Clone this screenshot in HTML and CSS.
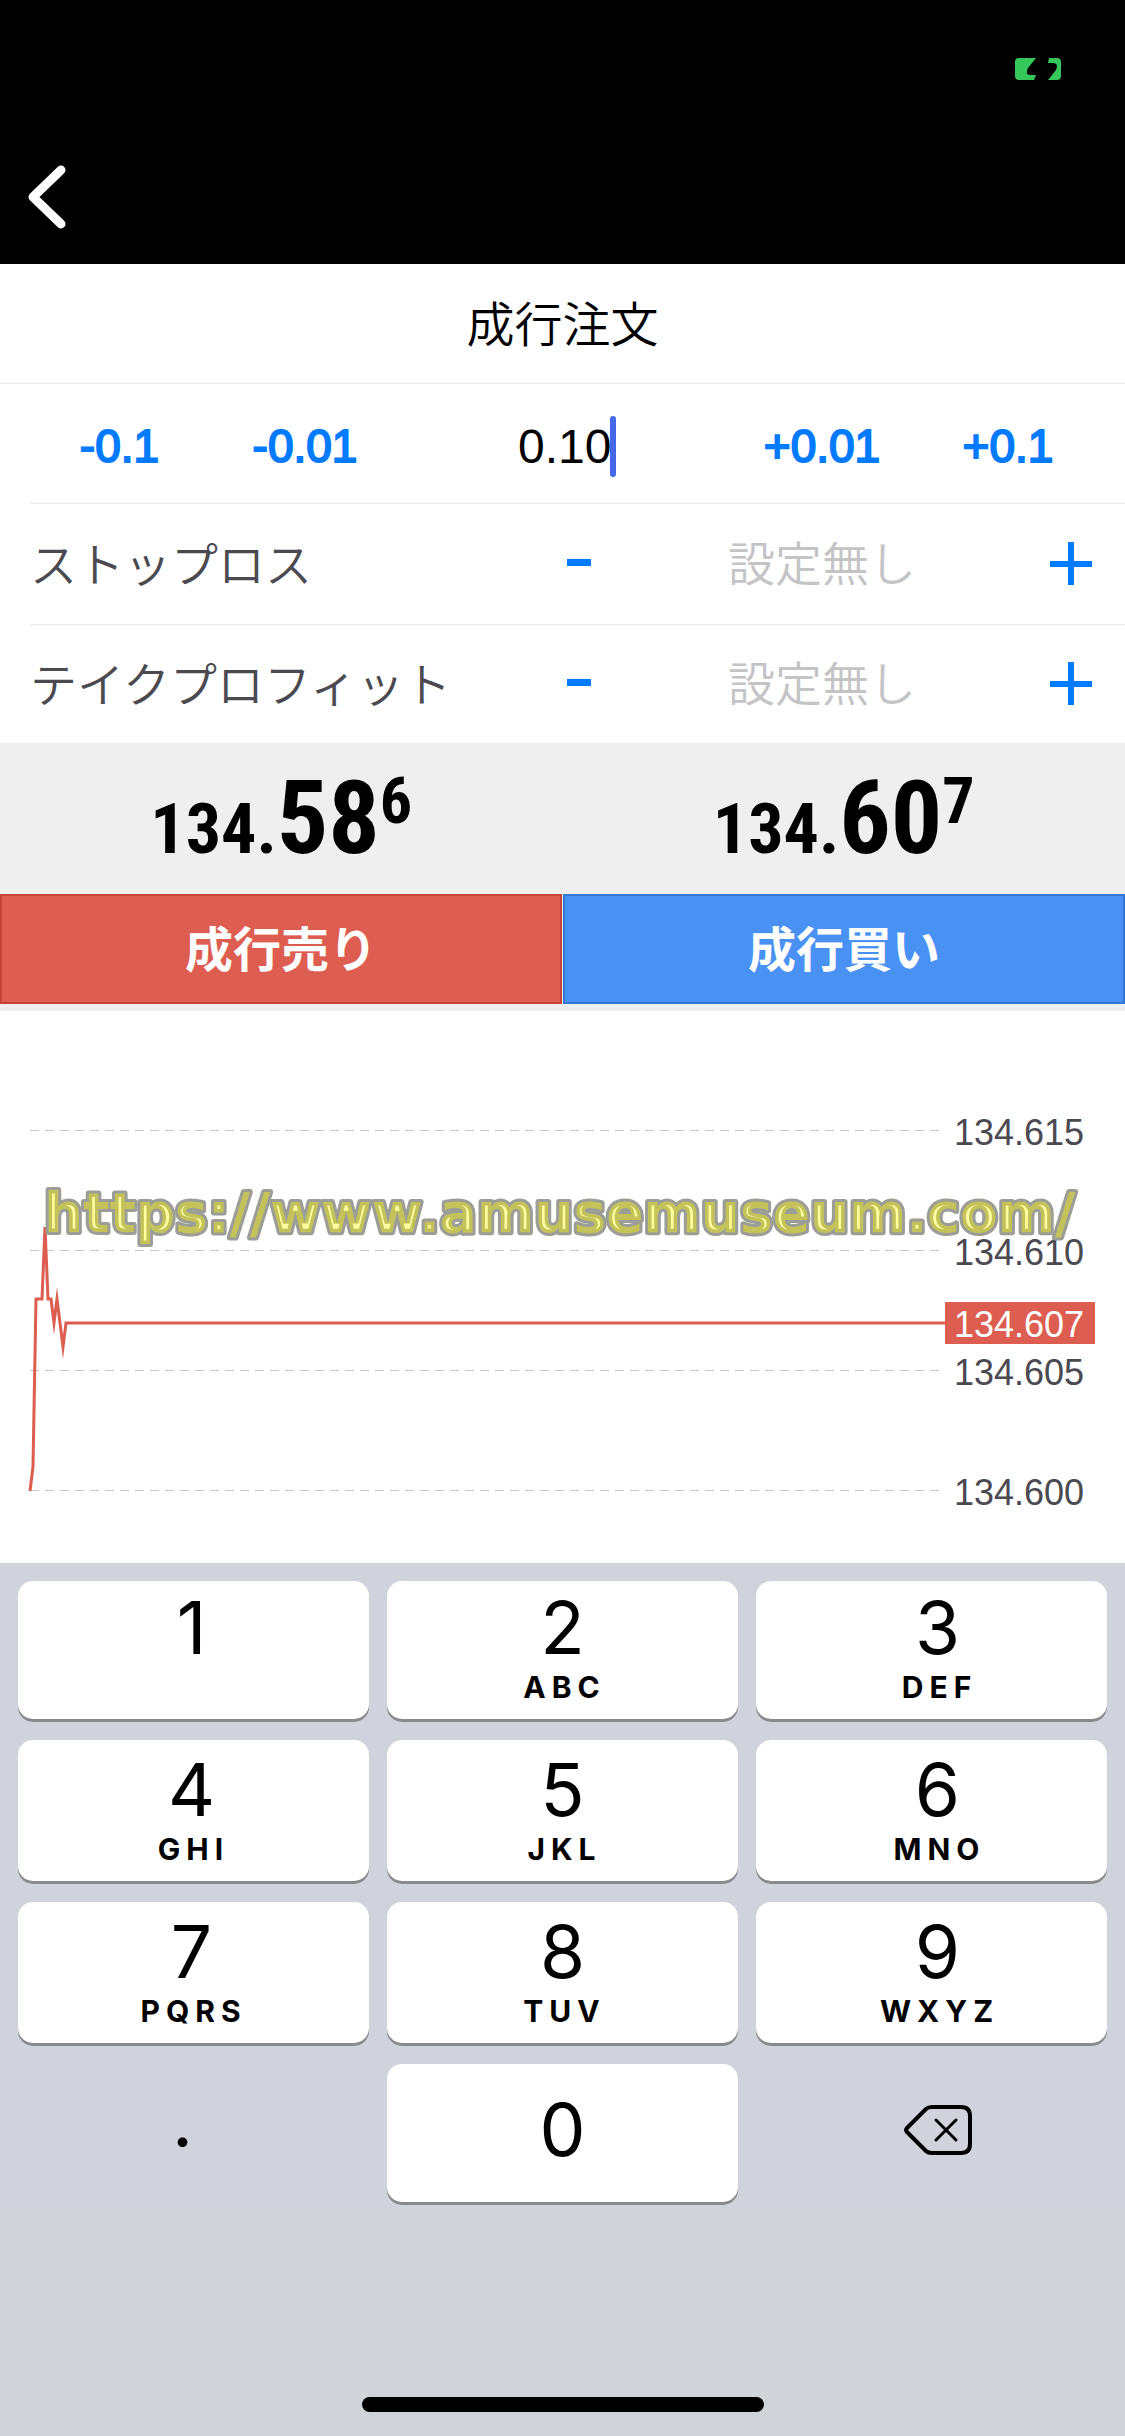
FILE: index.html
```html
<!DOCTYPE html>
<html lang="ja">
<head>
    <meta charset="UTF-8">
    <meta name="viewport" content="width=device-width, initial-scale=1.0">
    <title>成行注文</title>
    <link rel="stylesheet" href="styles.css">
</head>
<body>
    <header class="topbar">
        <div class="status">
            <svg class="battery" width="46" height="22" viewBox="0 0 46 22" aria-hidden="true">
                <path fill="#35c759" d="M4 0H21L13 10Q10 17 15 17H21L19 22H4Q0 22 0 18V4Q0 0 4 0Z"/>
                <path fill="#35c759" d="M34 0H42Q46 0 46 4V18Q46 22 42 22H33L41 12Q44 5 38 5H33Z"/>
            </svg>
        </div>
        <button class="back" type="button" aria-label="戻る">
            <svg width="38" height="64" viewBox="0 0 38 64" fill="none" stroke="#fff" stroke-width="9" stroke-linecap="round" stroke-linejoin="round">
                <path d="M33 5L5 32L33 59"/>
            </svg>
        </button>
    </header>

    <main class="order">
        <h1 class="title">成行注文</h1>

        <!-- ロット数 -->
        <div class="volume">
            <button class="step" type="button">-0.1</button>
            <button class="step" type="button">-0.01</button>
            <div class="lot">
                <input class="lot-input" type="text" inputmode="decimal" value="0.10" aria-label="数量">
                <span class="caret"></span>
            </div>
            <button class="step" type="button">+0.01</button>
            <button class="step" type="button">+0.1</button>
        </div>

        <div class="row">
            <label class="name" for="stopLoss">ストップロス</label>
            <button class="adjust" type="button" aria-label="減らす">
                <svg width="44" height="44" viewBox="0 0 44 44"><path fill="#007aff" d="M10 17h24v7H10z"/></svg>
            </button>
            <input class="value" id="stopLoss" type="text" placeholder="設定無し">
            <button class="adjust" type="button" aria-label="増やす">
                <svg width="44" height="44" viewBox="0 0 44 44"><path fill="#007aff" d="M1 19h18V0h6v19h18v6H25v18h-6V25H1z"/></svg>
            </button>
        </div>
        <div class="row">
            <label class="name" for="takeProfit">テイクプロフィット</label>
            <button class="adjust" type="button" aria-label="減らす">
                <svg width="44" height="44" viewBox="0 0 44 44"><path fill="#007aff" d="M10 17h24v7H10z"/></svg>
            </button>
            <input class="value" id="takeProfit" type="text" placeholder="設定無し">
            <button class="adjust" type="button" aria-label="増やす">
                <svg width="44" height="44" viewBox="0 0 44 44"><path fill="#007aff" d="M1 19h18V0h6v19h18v6H25v18h-6V25H1z"/></svg>
            </button>
        </div>

        <div class="prices">
            <p class="price">134.<span class="big">58</span><span class="pip">6</span></p>
            <p class="price">134.<span class="big">60</span><span class="pip">7</span></p>
        </div>
        <div class="trade">
            <button class="sell" type="button">成行売り</button>
            <button class="buy" type="button">成行買い</button>
        </div>
    </main>

    <!-- ティックチャート -->
    <svg class="chart" viewBox="0 0 1125 552">
        <defs>
            <text id="siteUrl" x="44" y="221">https://www.amusemuseum.com/</text>
            <clipPath id="urlClip"><use href="#siteUrl"/></clipPath>
        </defs>
        <g class="grid">
            <path d="M30 119.5H943"/>
            <path d="M30 239.5H943"/>
            <path d="M30 359.5H943"/>
            <path d="M30 479.5H943"/>
        </g>
        <g class="scale">
            <text x="954" y="134">134.615</text>
            <text x="954" y="254">134.610</text>
            <text x="954" y="374">134.605</text>
            <text x="954" y="494">134.600</text>
        </g>
        <polyline class="tick" points="30,480 33,456 36,288 42,288 45,216 48,288 51,288 54,312 57,288 60,312 63,336 66,312 946,312"/>
        <rect class="tag" x="945" y="291" width="150" height="42"/>
        <text class="tag-text" x="954" y="326">134.607</text>
        <g class="url">
            <use class="url-edge" href="#siteUrl"/>
            <g clip-path="url(#urlClip)"><use class="url-face" href="#siteUrl"/></g>
        </g>
    </svg>

    <section class="keyboard">
        <div class="keys">
            <button class="key" type="button">1<span class="letters"></span></button>
            <button class="key" type="button">2<span class="letters">ABC</span></button>
            <button class="key" type="button">3<span class="letters">DEF</span></button>
            <button class="key" type="button">4<span class="letters">GHI</span></button>
            <button class="key" type="button">5<span class="letters">JKL</span></button>
            <button class="key" type="button">6<span class="letters">MNO</span></button>
            <button class="key" type="button">7<span class="letters">PQRS</span></button>
            <button class="key" type="button">8<span class="letters">TUV</span></button>
            <button class="key" type="button">9<span class="letters">WXYZ</span></button>
            <button class="key plain dot" type="button">.</button>
            <button class="key zero" type="button">0</button>
            <button class="key plain delete" type="button" aria-label="削除">
                <svg width="68" height="50" viewBox="0 0 68 50" fill="none" stroke="#000" stroke-width="4" stroke-linejoin="round">
                    <path d="M28 2H57Q66 2 66 11V39Q66 48 57 48H28Q24 48 22 46L3 27Q1 25 3 23L22 4Q24 2 28 2Z"/>
                    <path stroke-width="3" stroke-linecap="round" d="M32 15L52 35M52 15L32 35"/>
                </svg>
            </button>
        </div>
        <div class="home-bar"></div>
    </section>
</body>
</html>
```
FILE: styles.css
```css
* {
    box-sizing: border-box;
}
body {
    margin: 0;
    min-height: 100vh;
    display: flex;
    flex-direction: column;
    background: #fff;
    color: #000;
    font-family: "Liberation Sans", "Noto Sans CJK JP", sans-serif;
    font-size: 48px;
}
button {
    padding: 0;
    border: none;
    background: none;
    color: inherit;
    font: inherit;
    cursor: pointer;
}
input {
    padding: 0;
    border: none;
    outline: none;
    background: none;
    color: inherit;
    font: inherit;
}
svg {
    display: block;
}

/* ヘッダー */
.topbar {
    height: 264px;
    background: #000;
}
.status {
    height: 130px;
    padding: 58px 64px 0;
    display: flex;
    justify-content: flex-end;
}
.back {
    height: 134px;
    padding: 0 28px;
}

/* 注文フォーム */
.title {
    margin: 0;
    height: 120px;
    line-height: 124px;
    border-bottom: 1px solid #ebebeb;
    font-size: 48px;
    font-weight: 350;
    text-align: center;
}
.volume {
    height: 120px;
    margin-left: 30px;
    padding: 5px 20px 0 0;
    display: grid;
    grid-template-columns: 179fr 192fr 332fr 178fr 194fr;
    align-items: center;
    border-bottom: 1px solid #ebebeb;
}
.step {
    color: #007aff;
    font-size: 46px;
    -webkit-text-stroke: 2px #007aff;
}
.lot {
    display: flex;
    justify-content: center;
    align-items: center;
}
.lot-input {
    width: 96px;
}
.caret {
    width: 6px;
    height: 61px;
    margin-left: -4px;
    border-radius: 3px;
    background: #4468e8;
}
.row {
    height: 120px;
    margin-left: 30px;
    padding-right: 32px;
    display: flex;
    align-items: center;
}
.row + .row {
    height: 119px;
    border-top: 1px solid #ebebeb;
}
.name {
    flex: 1;
    padding-bottom: 6px;
    color: #4a4a50;
    font-size: 47px;
    font-weight: 350;
}
.value {
    width: 448px;
    padding-right: 6px;
    text-align: center;
}
.value::placeholder {
    color: #c4c4c6;
    opacity: 1;
    font-size: 47px;
    font-weight: 350;
}

/* 価格 */
.prices {
    height: 151px;
    display: grid;
    grid-template-columns: 1fr 1fr;
    background: #efefef;
}
.price {
    margin: 0;
    line-height: 151px;
    font-family: "Roboto Condensed", "Liberation Sans", sans-serif;
    font-size: 70px;
    font-weight: 700;
    text-align: center;
}
.big {
    font-size: 102px;
}
.pip {
    font-size: 64px;
    vertical-align: 30px;
    line-height: 1;
}
.trade {
    display: grid;
    grid-template-columns: 1fr 1fr;
    gap: 1px;
    padding-bottom: 7px;
    background: #efefef;
}
.sell, .buy {
    height: 110px;
    padding-bottom: 6px;
    color: #fff;
    font-weight: 700;
}
.sell {
    background: #dd5e50;
    border: 2px solid #c44438;
}
.buy {
    background: #4a91f4;
    border: 2px solid #3478d4;
}

/* チャート */
.chart {
    width: 100%;
    height: auto;
}
.grid {
    stroke: #c8c8c8;
    stroke-width: 1;
    stroke-dasharray: 9 6;
}
.scale {
    fill: #4a4a50;
    font-size: 36px;
}
.tick {
    fill: none;
    stroke: #dd5e50;
    stroke-width: 3;
    stroke-miterlimit: 10;
}
.tag {
    fill: #dd5e50;
}
.tag-text {
    fill: #fff;
    font-size: 36px;
}
#siteUrl {
    font-family: "DejaVu Sans", sans-serif;
    font-size: 55px;
    font-weight: 700;
}
.url-edge {
    stroke: #9d9d98;
    stroke-width: 6;
    stroke-linejoin: round;
}
.url-face {
    fill: #ffffa0;
    stroke: #c3c35a;
    stroke-width: 7;
}

/* キーボード */
.keyboard {
    flex: 1;
    display: flex;
    flex-direction: column;
    justify-content: space-between;
    padding: 18px 18px 24px;
    background: linear-gradient(#d0d3db 70%, #d0d3d7);
    font-family: Inter, sans-serif;
}
.keys {
    display: grid;
    grid-template-columns: repeat(3, 1fr);
    grid-template-rows: 138px 141px 141px 138px;
    gap: 21px 18px;
}
.key {
    display: flex;
    flex-direction: column;
    align-items: center;
    justify-content: flex-end;
    padding: 0 0 16px;
    border-radius: 15px;
    background: #fff;
    box-shadow: 0 3px 0 #898a8e;
    font-size: 73px;
    line-height: 86px;
}
.key:nth-child(3n) {
    padding-left: 12px;
}
.key:nth-child(3n+1) {
    padding-right: 4px;
}
.letters {
    height: 32px;
    padding-left: 4px;
    font-size: 30px;
    font-weight: 700;
    line-height: 32px;
    letter-spacing: 6px;
}
.key.zero, .key.plain {
    justify-content: center;
    padding-bottom: 6px;
}
.key.plain {
    background: none;
    box-shadow: none;
}
.key.dot {
    padding: 0 22px 24px 0;
}
.home-bar {
    width: 402px;
    height: 15px;
    margin: 0 auto;
    border-radius: 8px;
    background: #000;
}
```
